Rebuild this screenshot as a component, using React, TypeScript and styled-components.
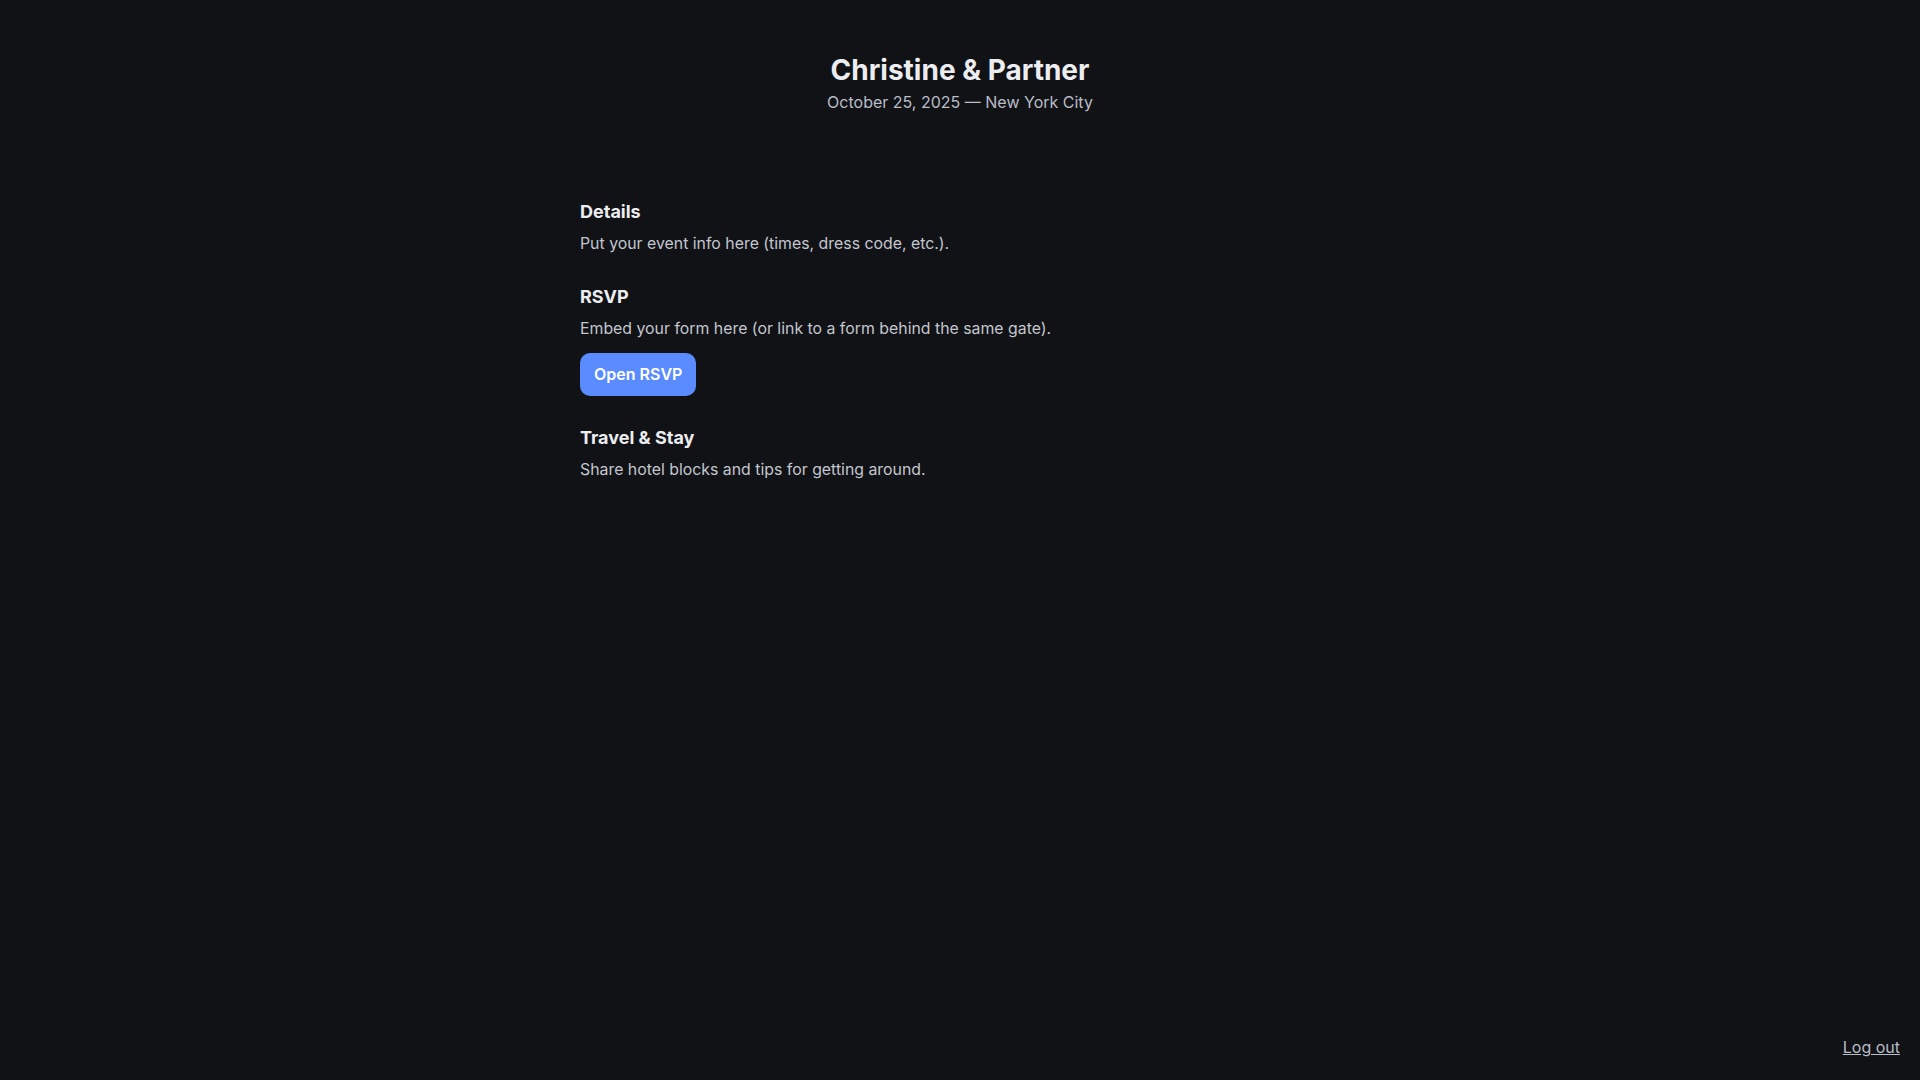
import styled, { createGlobalStyle } from "styled-components";

const GlobalStyle = createGlobalStyle`
  html, body {
    margin: 0;
    padding: 0;
    background: #111216;
  }
  body {
    font-family: Inter, "Noto Sans", sans-serif;
    color: #e8e9ed;
  }
`;

const Page = styled.div`
  min-height: 100vh;
  display: flex;
  flex-direction: column;
  box-sizing: border-box;
`;

const Header = styled.header`
  text-align: center;
  padding-top: 54px;
`;

const Title = styled.h1`
  margin: 0;
  font-size: 28px;
  line-height: 1.2;
  font-weight: 700;
  color: #ecedf0;
`;

const Subtitle = styled.div`
  margin-top: 2px;
  font-size: 16px;
  line-height: 24px;
  color: #b9bdc7;
`;

const Main = styled.main`
  width: 760px;
  margin: 87px auto 0;
  display: flex;
  flex-direction: column;
  gap: 30px;
`;

const Section = styled.section`
  display: flex;
  flex-direction: column;
  align-items: flex-start;
`;

const Heading = styled.h2`
  margin: 0 0 9px;
  font-size: 18px;
  line-height: 22px;
  font-weight: 700;
  color: #ecedf0;
`;

const Text = styled.p`
  margin: 0;
  font-size: 15.85px;
  line-height: 24px;
  color: #c3c6ce;
`;

const Button = styled.button`
  margin-top: 12px;
  margin-bottom: 1px;
  font-family: inherit;
  font-size: 16px;
  font-weight: 600;
  line-height: 23px;
  padding: 10px 14px;
  border: none;
  border-radius: 10px;
  background: #5b8cff;
  color: #ffffff;
  cursor: pointer;
`;

const Footer = styled.footer`
  margin-top: auto;
  display: flex;
  justify-content: flex-end;
  padding: 0 20px 22px;
`;

const LogOut = styled.a`
  font-size: 16px;
  line-height: 22px;
  color: #b9bdc7;
  text-decoration: underline;
  cursor: pointer;
`;

const sections = [
  { title: "Details", text: "Put your event info here (times, dress code, etc.)." },
  {
    title: "RSVP",
    text: "Embed your form here (or link to a form behind the same gate).",
    action: "Open RSVP",
  },
  { title: "Travel & Stay", text: "Share hotel blocks and tips for getting around." },
];

const App = () => {
  return (
    <>
      <GlobalStyle />
      <Page>
        <Header>
          <Title>Christine &amp; Partner</Title>
          <Subtitle>October 25, 2025 — New York City</Subtitle>
        </Header>
        <Main>
          {sections.map((s) => (
            <Section key={s.title}>
              <Heading>{s.title}</Heading>
              <Text>{s.text}</Text>
              {s.action && <Button>{s.action}</Button>}
            </Section>
          ))}
        </Main>
        <Footer>
          <LogOut>Log out</LogOut>
        </Footer>
      </Page>
    </>
  );
};

export default App;
